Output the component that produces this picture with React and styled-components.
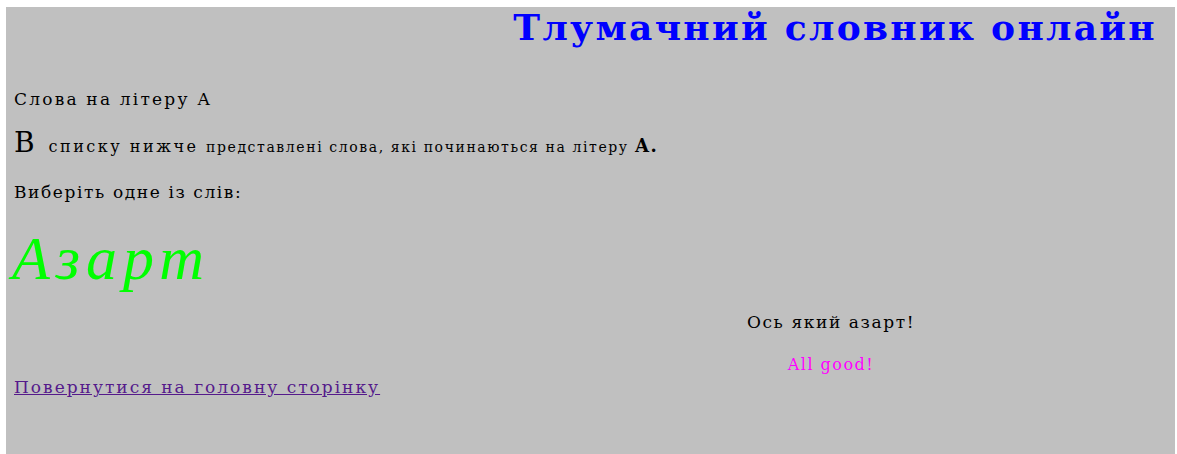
import React from "react"
import styled, { createGlobalStyle } from "styled-components"

const GlobalStyle = createGlobalStyle`
  html, body {
    margin: 0;
    padding: 0;
    background: #ffffff;
  }
  body {
    padding: 7px 2px 0 6px;
    font-family: "DejaVu Serif", "Liberation Serif", serif;
  }
`

const Page = styled.div`
  background: #c0c0c0;
  min-height: 447px;
  padding: 0 20px 0 8px;
  color: #000;
  display: flex;
  flex-direction: column;
`

const Title = styled.h1`
  margin: 0 -2px 0 0;
  text-align: right;
  color: #0000ff;
  font-family: "DejaVu Serif", serif;
  font-weight: bold;
  font-size: 36px;
  letter-spacing: 2.3px;
  line-height: 40px;
`

const Line = styled.p`
  margin: ${(p) => p.$top || 0}px 0 0;
  font-size: ${(p) => p.$size || 17}px;
  letter-spacing: ${(p) => p.$spacing || 0}px;
  line-height: 1.2;
`

const Big = styled.span`
  font-size: 28px;
  letter-spacing: 14px;
`

const Spaced = styled.span`
  font-size: 16px;
  letter-spacing: 2.5px;
`

const Small = styled.span`
  font-size: 14px;
  letter-spacing: 1.6px;
`

const Bold = styled.b`
  font-size: 18px;
  letter-spacing: 1px;
`

const Word = styled.div`
  margin-top: 25px;
  margin-left: -2px;
  font-family: "Liberation Serif", serif;
  font-style: italic;
  color: #00ff00;
  font-size: 62px;
  letter-spacing: 6px;
  line-height: 62px;
`

const Reaction = styled.div`
  margin: 23px 0 0 617px;
  width: 400px;
  text-align: center;
  font-size: 17px;
  letter-spacing: 1.6px;
`

const Good = styled.div`
  margin-top: 23px;
  color: #ff00ff;
  font-size: 16px;
  letter-spacing: 1.5px;
`

const HomeLink = styled.a`
  margin-top: 3px;
  align-self: flex-start;
  color: #551a8b;
  font-size: 17px;
  letter-spacing: 2px;
  text-decoration: underline;
`

export default function App() {
  return (
    <>
      <GlobalStyle />
      <Page>
        <Title>Тлумачний словник онлайн</Title>
        <Line $top={42} $spacing={2.2}>Слова на літеру А</Line>
        <Line $top={17}>
          <Big>В</Big>
          <Spaced>списку нижче </Spaced>
          <Small>представлені слова, які починаються на літеру </Small>
          <Bold>А.</Bold>
        </Line>
        <Line $top={22} $spacing={1.6}>Виберіть одне із слів:</Line>
        <Word>Азарт</Word>
        <Reaction>
          Ось який азарт!
          <Good>All good!</Good>
        </Reaction>
        <HomeLink href="#">Повернутися на головну сторінку</HomeLink>
      </Page>
    </>
  )
}
